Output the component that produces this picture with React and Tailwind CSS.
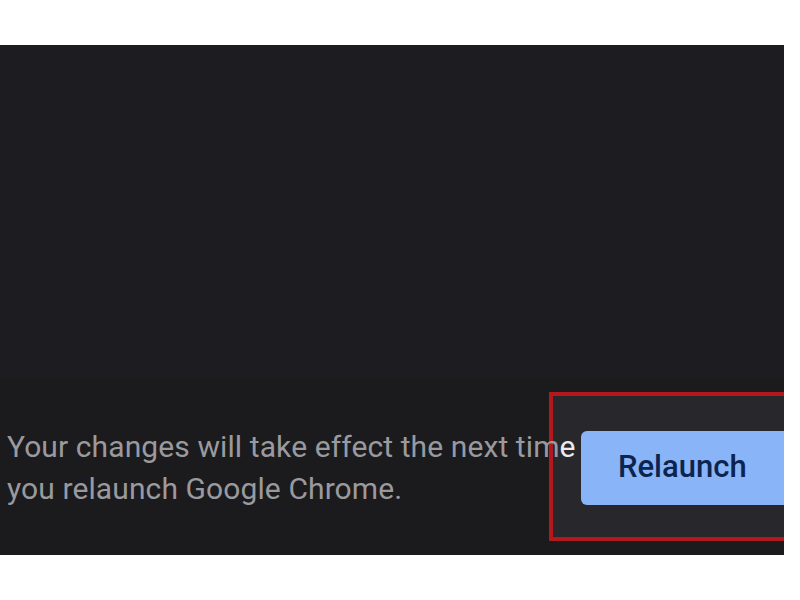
import React from "react";

const App = () => {
  return (
    <div className="w-[800px] h-[600px] bg-white pt-[45px]" style={{ fontFamily: "Roboto, 'Liberation Sans', sans-serif" }}>
      <div className="w-[784px] h-[510px] bg-[#1d1d21] flex flex-col">
        {/* empty settings area */}
        <div className="h-[333px]" />

        {/* FOOTER */}
        <div className="relative flex-1 bg-[#1b1b1e]">
          {/* highlight box round the button */}
          <div className="absolute left-[549px] top-[14px] w-[235px] h-[149px] bg-[#28282c] border-[4px] border-r-0 border-[#b3191c] flex items-center pl-[28px]">
            <button className="w-full h-[74px] mt-[2px] bg-[#8ab4f8] rounded-l-[6px] text-left pl-[37px] text-[31px] text-[#0c2550] font-medium">
              Relaunch
            </button>
          </div>

          <p className="relative z-10 pt-[48px] pl-[7px] text-[30px] leading-[42px] text-[#9a9a9e] tracking-[0.1px]">
            Your changes will take effect the next tim<span className="text-[#ececec]">e</span>
            <br />
            you relaunch Google Chrome.
          </p>
        </div>
      </div>
    </div>
  );
};

export default App;
